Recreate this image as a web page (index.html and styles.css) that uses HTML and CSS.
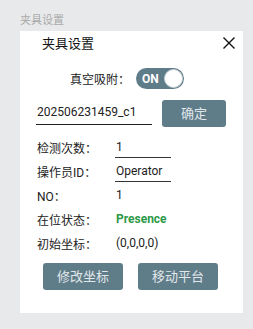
FILE: index.html
```html
<!DOCTYPE html>
<html lang="zh-CN">
<head>
  <meta charset="UTF-8">
  <meta name="viewport" content="width=device-width, initial-scale=1.0">
  <title>夹具设置</title>
  <link rel="stylesheet" href="styles.css">
</head>
<body>
  <div class="page">
    <div class="pageTitle">夹具设置</div>
    <div class="dialog">
      <div class="dialogHead">
        <span class="dialogTitle">夹具设置</span>
        <svg class="closeIcon" width="12" height="12" viewBox="0 0 12 12">
          <path d="M0.5 0.5 L11.5 11.5 M11.5 0.5 L0.5 11.5" stroke="#111" stroke-width="1.4" fill="none"/>
        </svg>
      </div>
      <div class="vacuumRow">
        <span class="label">真空吸附：</span>
        <div class="switch">
          <span class="switchText">ON</span>
          <span class="switchKnob"></span>
        </div>
      </div>
      <div class="codeRow">
        <div class="codeInput">202506231459_c1</div>
        <div class="btn btnSmall">确定</div>
      </div>
      <ul class="fields">
        <li class="field">
          <span class="label">检测次数：</span>
          <span class="value valueInput">1</span>
        </li>
        <li class="field">
          <span class="label">操作员ID：</span>
          <span class="value valueInput">Operator</span>
        </li>
        <li class="field">
          <span class="label">NO：</span>
          <span class="value">1</span>
        </li>
        <li class="field">
          <span class="label">在位状态：</span>
          <span class="value presence">Presence</span>
        </li>
        <li class="field">
          <span class="label">初始坐标：</span>
          <span class="value">(0,0,0,0)</span>
        </li>
      </ul>
      <div class="actions">
        <div class="btn">修改坐标</div>
        <div class="btn">移动平台</div>
      </div>
    </div>
  </div>
</body>
</html>
```

FILE: styles.css
```css
body{
  margin: 0;
  background-color: #e8e9eb;
  font-family: Roboto, "Noto Sans CJK SC", sans-serif;
  color: #222;
}
.page{
  padding: 14px 10px 0 20px;
}
.pageTitle{
  font-size: 11px;
  line-height: 14px;
  color: #a9a9a9;
  margin-bottom: 3px;
}
.dialog{
  width: 223px;
  height: 282px;
  background-color: #fff;
  box-sizing: border-box;
}
.dialogHead{
  display: flex;
  align-items: center;
  justify-content: space-between;
  height: 23px;
  padding: 0 8px 0 22px;
}
.dialogTitle{
  font-size: 13px;
  color: #111;
}
.closeIcon{
  display: block;
}
.label{
  font-size: 12px;
  color: #222;
}
.vacuumRow{
  display: flex;
  align-items: center;
  margin-top: 14px;
  height: 21px;
  padding-left: 50px;
}
.vacuumRow .label{
  width: 66px;
}
.switch{
  display: flex;
  align-items: center;
  justify-content: space-between;
  width: 48px;
  height: 21px;
  border-radius: 11px;
  background-color: #5f7c89;
  box-sizing: border-box;
  padding: 0 1px 0 6px;
}
.switchText{
  font-size: 12px;
  font-weight: bold;
  color: #fff;
}
.switchKnob{
  width: 19px;
  height: 19px;
  border-radius: 50%;
  background-color: #fff;
  border: 1px solid #c7d0d5;
  box-sizing: border-box;
}
.codeRow{
  display: flex;
  align-items: flex-start;
  margin-top: 11px;
  padding-left: 16px;
  height: 27px;
}
.codeInput{
  width: 116px;
  height: 25px;
  line-height: 25px;
  font-size: 12px;
  border-bottom: 1px solid #222;
  padding-left: 1px;
  box-sizing: border-box;
  margin-right: 10px;
}
.btn{
  width: 80px;
  height: 27px;
  line-height: 27px;
  text-align: center;
  font-size: 13px;
  color: #e1e7ea;
  background-color: #5f7c89;
  border-radius: 3px;
}
.btnSmall{
  width: 64px;
}
.fields{
  list-style: none;
  margin: 8px 0 0 0;
  padding: 0 0 0 17px;
}
.field{
  display: flex;
  align-items: center;
  height: 24px;
}
.field .label{
  width: 78px;
}
.value{
  font-size: 12px;
  padding-left: 1px;
}
.valueInput{
  width: 56px;
  height: 20px;
  line-height: 18px;
  box-sizing: border-box;
  border-bottom: 1px solid #333;
  margin-top: 2px;
}
.presence{
  color: #2e9a48;
  font-weight: bold;
}
.actions{
  display: flex;
  gap: 15px;
  margin-top: 8px;
  padding-left: 23px;
}
```
